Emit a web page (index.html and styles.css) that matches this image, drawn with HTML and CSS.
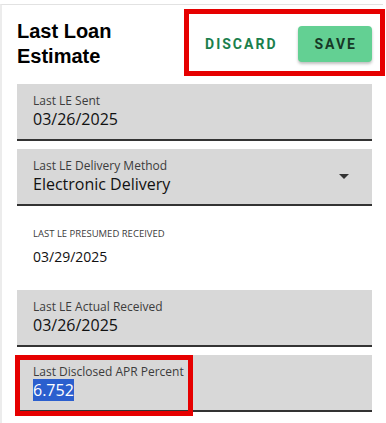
FILE: index.html
```html
<!DOCTYPE html>
<html lang="en">
<head>
  <meta charset="UTF-8" />
  <meta name="viewport" content="width=device-width, initial-scale=1.0"/>
  <title>Last Loan Estimate</title>
  <link rel="stylesheet" href="styles.css">
</head>
<body>
  <div class="panel">
    <div class="panel-header">
      <h2>Last Loan<br>Estimate</h2>
      <div class="actions">
        <button class="btn-text">Discard</button>
        <button class="btn-save">Save</button>
      </div>
    </div>

    <div class="fields">
      <div class="field">
        <span class="field-label">Last LE Sent</span>
        <span class="field-value">03/26/2025</span>
      </div>
      <div class="field field-select">
        <div class="select-text">
          <span class="field-label">Last LE Delivery Method</span>
          <span class="field-value">Electronic Delivery</span>
        </div>
        <span class="caret"></span>
      </div>
      <div class="readonly">
        <span class="readonly-label">Last LE Presumed Received</span>
        <span class="readonly-value">03/29/2025</span>
      </div>
      <div class="field">
        <span class="field-label">Last LE Actual Received</span>
        <span class="field-value">03/26/2025</span>
      </div>
      <div class="field">
        <span class="field-label">Last Disclosed APR Percent</span>
        <span class="field-value"><span class="selected">6.752</span></span>
      </div>
    </div>
  </div>

  <!-- review highlights -->
  <div class="mark mark-actions"></div>
  <div class="mark mark-apr"></div>
</body>
</html>
```

FILE: styles.css
```css
:root {
  --field-bg: #d8d8d8;
  --line: #333;
  --label: #3c3c3c;
  --text: #111;
  --green: #63d093;
  --green-dark: #1b7f4d;
  --mark: #e60000;
}

body {
  margin: 0;
  background: #fff;
  font-family: 'Open Sans', 'Noto Sans', sans-serif;
  color: var(--text);
}

.panel {
  box-sizing: border-box;
  width: 383px;
  margin-top: 4px;
  padding: 14px 11px 20px 15px;
  border-top: 1px solid #e2e2e2;
  border-left: 2px solid #ececec;
  min-height: 419px;
}

.panel-header {
  display: flex;
  justify-content: space-between;
  align-items: center;
  margin-bottom: 15px;
}

h2 {
  margin: 0;
  font-family: 'Liberation Sans', Arial, sans-serif;
  font-size: 20px;
  line-height: 25px;
  font-weight: 700;
  color: #000;
}

.actions {
  display: flex;
  align-items: center;
  gap: 5px;
}

.actions button {
  font-family: Roboto, sans-serif;
  font-size: 14px;
  font-weight: 700;
  letter-spacing: 2px;
  text-transform: uppercase;
  height: 36px;
  padding: 0 15px 0 17px;
  border: none;
  border-radius: 4px;
  cursor: pointer;
}

.btn-text {
  background: transparent;
  color: var(--green-dark);
}

.btn-save {
  background: var(--green);
  color: #173826;
  box-shadow: 0 2px 3px rgba(0, 0, 0, 0.25);
}

.fields {
  display: flex;
  flex-direction: column;
  gap: 8px;
}

.field {
  display: flex;
  flex-direction: column;
  height: 55px;
  padding: 0 16px;
  background: var(--field-bg);
  border-bottom: 2px solid var(--line);
}

.field-label {
  font-size: 12px;
  line-height: 16px;
  margin-top: 9px;
  color: var(--label);
}

.field-value {
  font-size: 16px;
  line-height: 23px;
  margin-top: -1px;
}

.selected {
  background: #2b5fce;
  color: #fff;
}

.field-select {
  flex-direction: row;
  align-items: center;
  justify-content: space-between;
  padding-right: 23px;
}

.select-text {
  display: flex;
  flex-direction: column;
  align-self: flex-start;
}

.caret {
  width: 0;
  height: 0;
  border-left: 5px solid transparent;
  border-right: 5px solid transparent;
  border-top: 5px solid #333;
  margin-top: -1px;
}

.readonly {
  display: flex;
  flex-direction: column;
  height: 68px;
  padding: 0 16px;
}

.readonly-label {
  font-size: 9.5px;
  line-height: 14px;
  margin-top: 13px;
  text-transform: uppercase;
  color: var(--label);
}

.readonly-value {
  font-size: 14px;
  line-height: 20px;
  margin-top: 6px;
}

.mark {
  position: absolute;
  border: 5px solid var(--mark);
  box-sizing: border-box;
}

.mark-actions {
  left: 184px;
  top: 9px;
  width: 201px;
  height: 67px;
}

.mark-apr {
  left: 15px;
  top: 355px;
  width: 178px;
  height: 61px;
}
```
